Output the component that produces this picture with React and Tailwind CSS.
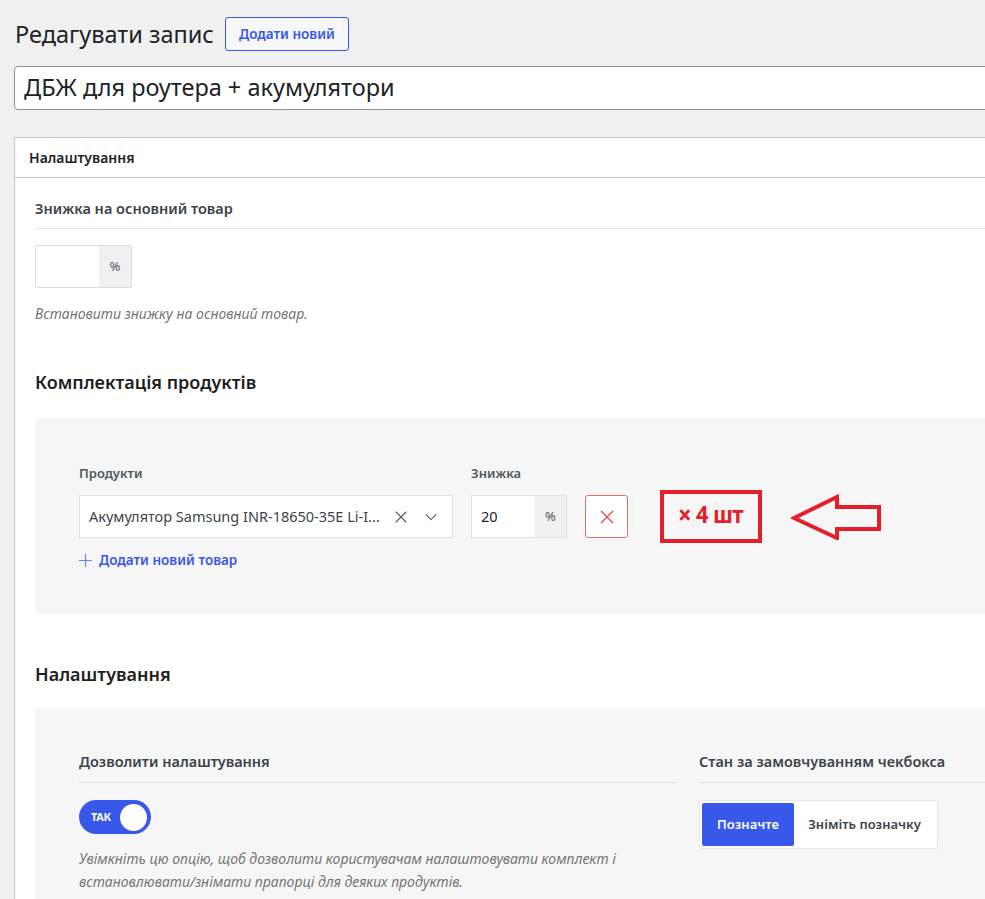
import React, { useState } from "react";

// маленька іконка хрестика
const XIcon = ({ className }) => (
  <svg viewBox="0 0 16 16" className={className} fill="none" stroke="currentColor" strokeWidth="1.3">
    <path d="M2 2l12 12M14 2L2 14" />
  </svg>
);

const Chevron = ({ className }) => (
  <svg viewBox="0 0 16 16" className={className} fill="none" stroke="currentColor" strokeWidth="1.2">
    <path d="M2 5l6 6 6-6" />
  </svg>
);

const Plus = ({ className }) => (
  <svg viewBox="0 0 14 14" className={className} fill="none" stroke="currentColor" strokeWidth="1.3">
    <path d="M7 0v14M0 7h14" />
  </svg>
);

const Arrow = () => (
  <svg width="90" height="46" viewBox="0 0 90 46" fill="none" stroke="#e3202a" strokeWidth="4" strokeLinejoin="miter">
    <path d="M3 24L46 3V13H88V35H46V44Z" />
  </svg>
);

const App = () => {
  const [enabled, setEnabled] = useState(true);
  const [checked, setChecked] = useState(true);

  return (
    <div className="w-[985px] h-[899px] overflow-hidden bg-[#f0f0f0] font-['Noto_Sans',sans-serif] text-[#1d2327]">
      <div className="pl-[14px] w-[1030px]">
        {/* заголовок */}
        <div className="flex items-center pt-[17px]">
          <h1 className="ml-[1px] text-[23.5px] leading-[34px] font-normal">Редагувати запис</h1>
          <button className="ml-[11px] h-[34px] px-[13px] border border-[#3858e9] rounded-[3px] text-[13.5px] font-semibold text-[#3858e9] bg-[#f6f7f7]">
            Додати новий
          </button>
        </div>

        {/* назва запису */}
        <div className="mt-[15px] h-[44px] flex items-center bg-white border border-[#8c8f94] rounded-l-[4px] pl-[9px] text-[23.5px]">
          ДБЖ для роутера + акумулятори
        </div>

        {/* postbox */}
        <div className="mt-[27px] bg-white border border-[#c3c4c7]">
          <div className="h-[40px] border-b border-[#c3c4c7] pl-[14px] flex items-center text-[14px] font-semibold">
            Налаштування
          </div>

          <div className="pl-[20px]">
            <div className="pt-[20px] pb-[10px] border-b border-[#e8e8e8] text-[14.5px] leading-[20px] font-semibold text-[#3c434a]">
              Знижка на основний товар
            </div>

            <div className="mt-[16px] flex h-[43px] w-[97px] border border-[#dcdcde] rounded-[2px]">
              <div className="w-[63px] bg-white" />
              <div className="flex-1 bg-[#f0f0f1] flex items-center justify-center text-[13px] text-[#50575e]">%</div>
            </div>

            <p className="mt-[16px] text-[14px] leading-[20px] italic text-[#757575]">
              Встановити знижку на основний товар.
            </p>

            <h2 className="mt-[45px] text-[18px] leading-[26px] font-semibold text-[#1e1e1e]">Комплектація продуктів</h2>

            <div className="mt-[23px] h-[196px] bg-[#f6f6f6] rounded-l-[4px] pl-[44px] pt-[46px]">
              <div className="flex text-[13px] leading-[18px] font-semibold text-[#50575e]">
                <span className="w-[392px]">Продукти</span>
                <span>Знижка</span>
              </div>
              <div className="mt-[13px] h-[43px] flex items-center">
                <div className="w-[374px] h-[43px] bg-white border border-[#e0e0e0] flex items-center pl-[9px] pr-[14px] text-[14.5px] text-[#3c434a]">
                  <span className="flex-1 whitespace-nowrap overflow-hidden">Акумулятор Samsung INR-18650-35E Li-I...</span>
                  <XIcon className="w-[14px] h-[14px] ml-[10px] text-[#50575e]" />
                  <Chevron className="w-[14px] h-[14px] ml-[16px] text-[#50575e]" />
                </div>
                <div className="ml-[18px] flex h-[43px] w-[96px] border border-[#e0e0e0]">
                  <div className="w-[63px] bg-white flex items-center pl-[9px] text-[14.5px]">20</div>
                  <div className="flex-1 bg-[#f0f0f1] flex items-center justify-center text-[13px] text-[#50575e]">%</div>
                </div>
                <button className="ml-[18px] w-[43px] h-[43px] bg-white border border-[#e26f6f] rounded-[3px] flex items-center justify-center text-[#e04b4b]">
                  <XIcon className="w-[16px] h-[16px]" />
                </button>
                <div className="ml-[32px] shrink-0 w-[102px] h-[53px] border-[4px] border-[#e3202a] flex items-center justify-center font-['Roboto',sans-serif] font-bold text-[23px] text-[#e3202a] tracking-[-0.5px]">
                  × 4 шт
                </div>
                <div className="ml-[29px] shrink-0">
                  <Arrow />
                </div>
              </div>
              <button className="mt-[13px] flex items-center text-[13.5px] leading-[18px] font-semibold text-[#3858e9]">
                <Plus className="w-[13px] h-[13px] mr-[7px] text-[#6c84ee]" />
                Додати новий товар
              </button>
            </div>

            <h2 className="mt-[47px] text-[18px] leading-[26px] font-semibold text-[#1e1e1e]">Налаштування</h2>

            <div className="mt-[22px] h-[220px] bg-[#f6f6f6] rounded-l-[4px] pl-[44px] pt-[42px] grid grid-cols-[598px_1fr] gap-[22px]">
              <div>
                <div className="pb-[11px] border-b border-[#e0e0e0] text-[14.5px] leading-[20px] font-semibold text-[#3c434a]">
                  Дозволити налаштування
                </div>
                <button
                  onClick={() => setEnabled(!enabled)}
                  className="mt-[17px] w-[72px] h-[34px] rounded-full bg-[#3858e9] flex items-center justify-between pl-[12px] pr-[4px]"
                >
                  <span className="text-[11px] font-bold text-white tracking-[-0.3px]">ТАК</span>
                  <span className="w-[27px] h-[27px] rounded-full bg-white" />
                </button>
                <p className="mt-[13px] text-[14px] leading-[23px] italic text-[#757575]">
                  Увімкніть цю опцію, щоб дозволити користувачам налаштовувати комплект і
                  <br />
                  встановлювати/знімати прапорці для деяких продуктів.
                </p>
              </div>
              <div>
                <div className="pb-[11px] border-b border-[#e0e0e0] text-[14.5px] leading-[20px] font-semibold text-[#3c434a]">
                  Стан за замовчуванням чекбокса
                </div>
                <div className="mt-[17px] w-[239px] h-[49px] bg-white border border-[#e8e8e8] rounded-[2px] p-[2px] flex">
                  <button
                    onClick={() => setChecked(true)}
                    className="w-[92px] h-full rounded-[2px] bg-[#3858e9] text-white text-[13px] font-semibold"
                  >
                    Позначте
                  </button>
                  <button onClick={() => setChecked(false)} className="flex-1 text-[13px] font-semibold text-[#3c434a]">
                    Зніміть позначку
                  </button>
                </div>
              </div>
            </div>
          </div>
        </div>
      </div>
    </div>
  );
};

export default App;
